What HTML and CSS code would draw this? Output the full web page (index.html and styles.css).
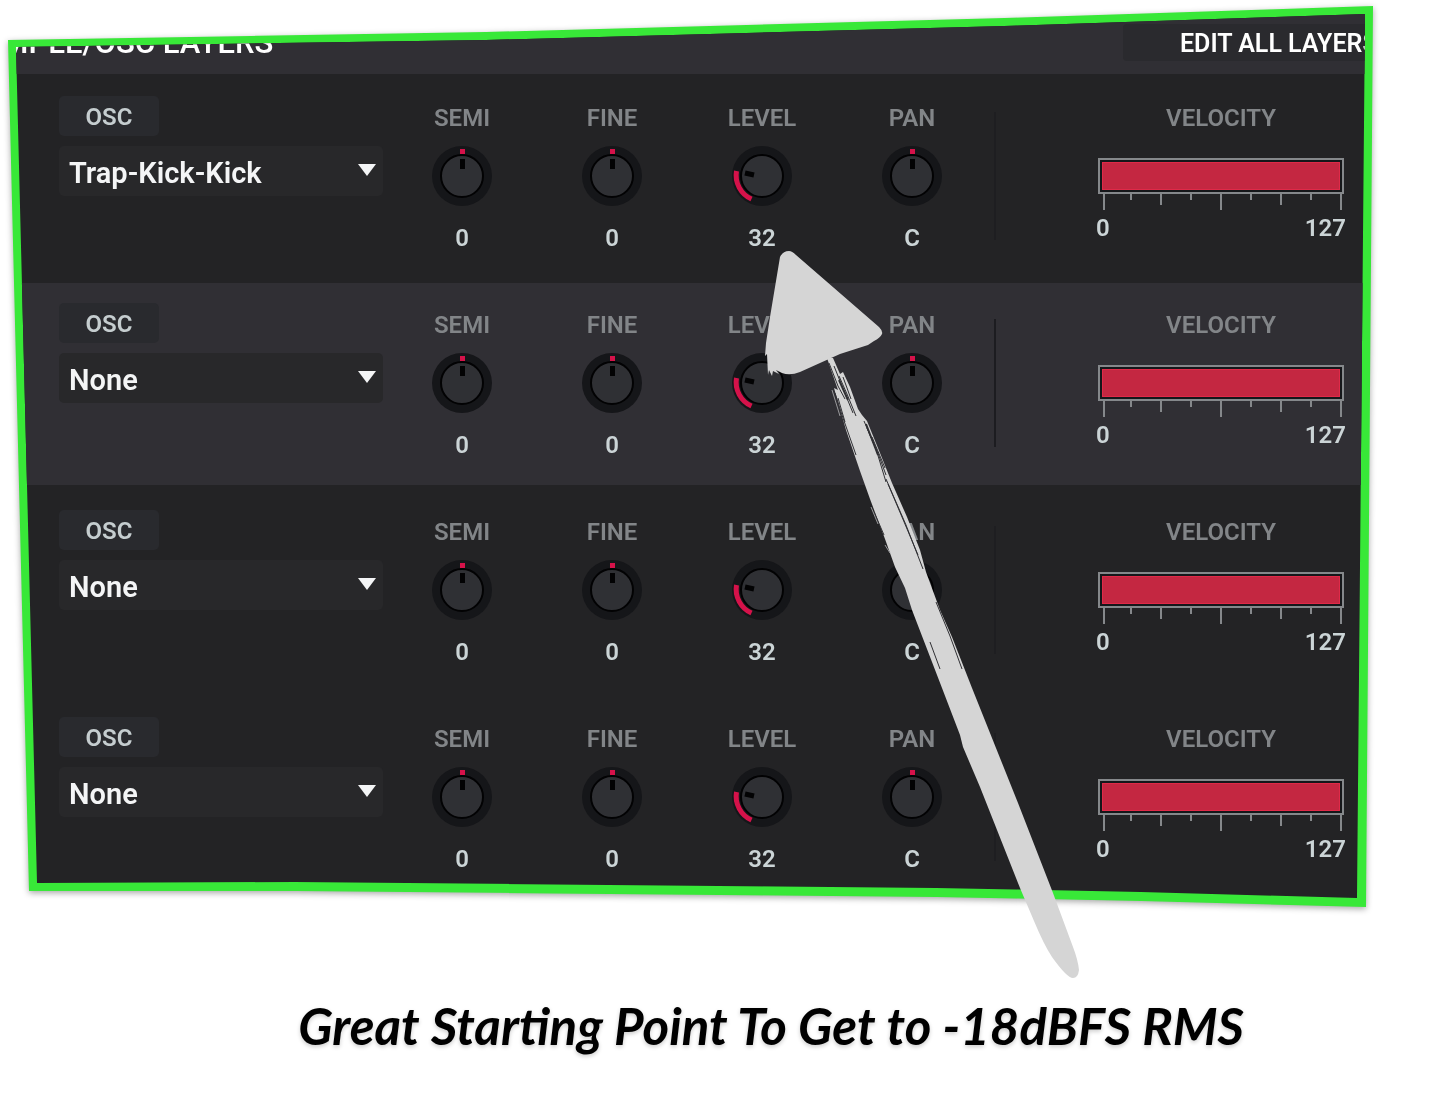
FILE: index.html
```html
<!DOCTYPE html>
<html lang="en">
<head>
  <meta charset="UTF-8">
  <meta name="viewport" content="width=device-width, initial-scale=1.0">
  <title>Sample/Osc Layers</title>
  <link rel="stylesheet" href="styles.css">
</head>
<body>
  <!-- Shared drawings -->
  <svg class="defs" aria-hidden="true">
    <symbol id="knob-center" viewBox="0 0 60 60">
      <circle cx="30" cy="30" r="30" fill="#151619"/>
      <circle cx="30" cy="30" r="21" fill="#2f3034" stroke="#020203" stroke-width="2"/>
      <rect x="28" y="13" width="5" height="10" fill="#020203"/>
      <rect x="28" y="3" width="5" height="5" fill="#d5124a"/>
    </symbol>
    <symbol id="knob-level" viewBox="0 0 60 60">
      <circle cx="30" cy="30" r="30" fill="#151619"/>
      <circle cx="30" cy="30" r="21" fill="#2f3034" stroke="#020203" stroke-width="2"/>
      <path d="M13 27 L22 29" stroke="#020203" stroke-width="5"/>
      <path d="M4.500 25 A26 26 0 0 0 19.500 53" stroke="#d5124a" stroke-width="5" fill="none"/>
    </symbol>
    <symbol id="ticks" viewBox="0 0 246 16">
      <path d="M6 0V16M123 0V16M243 0V16M63 0V11M183 0V11M33 0V6M93 0V6M153 0V6M213 0V6" stroke="#85888b" stroke-width="2"/>
    </symbol>
  </svg>

  <main class="board-wrap">
    <div class="board">
      <div class="panel">
        <header class="panel-header">
          <h1>SAMPLE/OSC LAYERS</h1>
          <button class="edit-all" type="button">EDIT ALL LAYERS</button>
        </header>

        <section class="layer">
          <div class="source">
            <button class="osc" type="button">OSC</button>
            <div class="picker">
              <select aria-label="Layer 1 sample"><option>Trap-Kick-Kick</option><option>None</option></select>
            </div>
          </div>
          <div class="knobs">
            <div class="knob"><label for="semi1">SEMI</label><div class="dial"><svg><use href="#knob-center"/></svg><input type="range" id="semi1" min="-36" max="36" value="0"></div><output for="semi1">0</output></div>
            <div class="knob"><label for="fine1">FINE</label><div class="dial"><svg><use href="#knob-center"/></svg><input type="range" id="fine1" min="-99" max="99" value="0"></div><output for="fine1">0</output></div>
            <div class="knob"><label for="level1">LEVEL</label><div class="dial"><svg><use href="#knob-level"/></svg><input type="range" id="level1" min="0" max="127" value="32"></div><output for="level1">32</output></div>
            <div class="knob"><label for="pan1">PAN</label><div class="dial"><svg><use href="#knob-center"/></svg><input type="range" id="pan1" min="-64" max="64" value="0"></div><output for="pan1">C</output></div>
          </div>
          <div class="velocity">
            <h2>VELOCITY</h2>
            <div class="bar"><div class="fill"></div></div>
            <svg class="ticks"><use href="#ticks"/></svg>
            <div class="range"><span>0</span><span>127</span></div>
          </div>
        </section>

        <section class="layer selected">
          <div class="source">
            <button class="osc" type="button">OSC</button>
            <div class="picker">
              <select aria-label="Layer 2 sample"><option>None</option></select>
            </div>
          </div>
          <div class="knobs">
            <div class="knob"><label for="semi2">SEMI</label><div class="dial"><svg><use href="#knob-center"/></svg><input type="range" id="semi2" min="-36" max="36" value="0"></div><output for="semi2">0</output></div>
            <div class="knob"><label for="fine2">FINE</label><div class="dial"><svg><use href="#knob-center"/></svg><input type="range" id="fine2" min="-99" max="99" value="0"></div><output for="fine2">0</output></div>
            <div class="knob"><label for="level2">LEVEL</label><div class="dial"><svg><use href="#knob-level"/></svg><input type="range" id="level2" min="0" max="127" value="32"></div><output for="level2">32</output></div>
            <div class="knob"><label for="pan2">PAN</label><div class="dial"><svg><use href="#knob-center"/></svg><input type="range" id="pan2" min="-64" max="64" value="0"></div><output for="pan2">C</output></div>
          </div>
          <div class="velocity">
            <h2>VELOCITY</h2>
            <div class="bar"><div class="fill"></div></div>
            <svg class="ticks"><use href="#ticks"/></svg>
            <div class="range"><span>0</span><span>127</span></div>
          </div>
        </section>

        <section class="layer">
          <div class="source">
            <button class="osc" type="button">OSC</button>
            <div class="picker">
              <select aria-label="Layer 3 sample"><option>None</option></select>
            </div>
          </div>
          <div class="knobs">
            <div class="knob"><label for="semi3">SEMI</label><div class="dial"><svg><use href="#knob-center"/></svg><input type="range" id="semi3" min="-36" max="36" value="0"></div><output for="semi3">0</output></div>
            <div class="knob"><label for="fine3">FINE</label><div class="dial"><svg><use href="#knob-center"/></svg><input type="range" id="fine3" min="-99" max="99" value="0"></div><output for="fine3">0</output></div>
            <div class="knob"><label for="level3">LEVEL</label><div class="dial"><svg><use href="#knob-level"/></svg><input type="range" id="level3" min="0" max="127" value="32"></div><output for="level3">32</output></div>
            <div class="knob"><label for="pan3">PAN</label><div class="dial"><svg><use href="#knob-center"/></svg><input type="range" id="pan3" min="-64" max="64" value="0"></div><output for="pan3">C</output></div>
          </div>
          <div class="velocity">
            <h2>VELOCITY</h2>
            <div class="bar"><div class="fill"></div></div>
            <svg class="ticks"><use href="#ticks"/></svg>
            <div class="range"><span>0</span><span>127</span></div>
          </div>
        </section>

        <section class="layer">
          <div class="source">
            <button class="osc" type="button">OSC</button>
            <div class="picker">
              <select aria-label="Layer 4 sample"><option>None</option></select>
            </div>
          </div>
          <div class="knobs">
            <div class="knob"><label for="semi4">SEMI</label><div class="dial"><svg><use href="#knob-center"/></svg><input type="range" id="semi4" min="-36" max="36" value="0"></div><output for="semi4">0</output></div>
            <div class="knob"><label for="fine4">FINE</label><div class="dial"><svg><use href="#knob-center"/></svg><input type="range" id="fine4" min="-99" max="99" value="0"></div><output for="fine4">0</output></div>
            <div class="knob"><label for="level4">LEVEL</label><div class="dial"><svg><use href="#knob-level"/></svg><input type="range" id="level4" min="0" max="127" value="32"></div><output for="level4">32</output></div>
            <div class="knob"><label for="pan4">PAN</label><div class="dial"><svg><use href="#knob-center"/></svg><input type="range" id="pan4" min="-64" max="64" value="0"></div><output for="pan4">C</output></div>
          </div>
          <div class="velocity">
            <h2>VELOCITY</h2>
            <div class="bar"><div class="fill"></div></div>
            <svg class="ticks"><use href="#ticks"/></svg>
            <div class="range"><span>0</span><span>127</span></div>
          </div>
        </section>
      </div>
    </div>
  </main>

  <!-- Brush arrow pointing at the first LEVEL value -->
  <svg class="arrow" viewBox="760 248 325 732" aria-hidden="true">
    <g fill="#d5d5d5">
      <path d="M827 358 L833 358 L840 374 L843 372 L850 387 L858 409 L862 415 L867 421 L880 453 L892 483 L907 517 L920 550 L926 572 L940 610 L952 637 L972 688 L1018 803 L1053 893 L1073 947 Q1078 960 1079 970 Q1078 978 1073 978 Q1067 978 1052 957 Q1044 945 1034 921 L1020 888 L980 787 L963 747 L960 735 L942 688 L912 610 L905 588 L895 567 L885 539 L870 499 L860 471 L846 430 L834 388 L838 390 Z"/>
      <path d="M780 257 Q783 251 789 251 Q792 251 796 255 L879 327 Q883 331 882 334 Q880 338 874 341 L868 345 L840 354 L800 372 Q790 376 782 373 L776 370 L779 374 L773 371 L772 376 L769 370 L768 375 L767 354 L765 356 L766 343 L770 317 Z"/>
    </g>
    <g fill="none" stroke="#303034" stroke-width="1">
      <path d="M829 363 L838 386 L845 399 M834 366 L844 391 L853 413 M839 376 L847 394 L856 416 M843 377 L851 399"/>
      <path d="M835 393 L843 418 L856 455 M838 398 L845 422 M848 440 L856 463"/>
      <path d="M864 421 L876 449 L886 482 M867 428 L879 456 L886 475 M872 437 L885 468 M888 484 L902 517 L918 555"/>
      <path d="M886 479 L906 525 L923 569 M874 512 L884 535"/>
      <path d="M936 602 L950 636 L962 669 M930 642 L940 669"/>
    </g>
    <path d="M839 380 L848 400 M866 424 L878 455" fill="none" stroke="#303034" stroke-width="2"/>
    <path d="M871 507 L878 524 M885 545 L890 553 M832 390 L840 416" fill="none" stroke="#9a9a9c" stroke-width="1"/>
  </svg>

  <p class="caption">Great Starting Point To Get to -18dBFS RMS</p>
</body>
</html>
```
FILE: styles.css
```css
* {
  box-sizing: border-box;
}
body {
  margin: 0;
  position: relative;
  background-color: #fff;
  font-family: Roboto, "Liberation Sans", sans-serif;
  font-size: 24px;
  font-weight: 600;
}
.defs {
  display: none;
}

/* Green frame with skewed edges */
.board-wrap {
  padding: 6px 83px 0 8px;
  filter: drop-shadow(0 2px 3px rgba(0, 0, 0, 0.35));
}
.board {
  background-color: #38e838;
  clip-path: polygon(0 34px, 35% 26px, 73% 12px, 100% 0, calc(100% - 7px) 100%, 83% calc(100% - 6px), 68% calc(100% - 10px), 21% calc(100% - 16px), 21px calc(100% - 16px));
}
.panel {
  padding-bottom: 3px;
  background-color: #232325;
  clip-path: polygon(8px 41px, 35% 34px, 73% 20px, calc(100% - 8px) 8px, calc(100% - 16px) calc(100% - 9px), 83% calc(100% - 15px), 68% calc(100% - 19px), 21% calc(100% - 25px), 29px calc(100% - 24px));
}
.panel-header {
  display: flex;
  justify-content: space-between;
  height: 68px;
  margin-bottom: 2px;
  padding-top: 18px;
  background-color: #302f34;
  overflow: hidden;
}
h1 {
  margin: 0 0 0 -46px;
  color: #fff;
  font-size: 31px;
  font-weight: 500;
  line-height: 38px;
}
.edit-all {
  width: 250px;
  height: 37px;
  padding: 2px 0 0 57px;
  border: none;
  border-radius: 4px;
  background-color: #2a2a2e;
  color: #fff;
  font: inherit;
  font-size: 25px;
  text-align: left;
  white-space: nowrap;
}

/* Layer rows */
.layer {
  display: flex;
  height: 202px;
  margin-bottom: 5px;
  padding: 20px 29px 0 51px;
}
.layer.selected {
  background-color: #302f34;
}
.source {
  width: 324px;
  margin-right: 4px;
}
.osc {
  display: block;
  width: 100px;
  height: 40px;
  margin-bottom: 10px;
  padding: 2px 0 0;
  border: none;
  border-radius: 5px;
  background-color: #292a2e;
  color: #c5cdcf;
  font: inherit;
}
.picker {
  position: relative;
}
.picker::after {
  content: "";
  position: absolute;
  top: 18px;
  right: 7px;
  width: 18px;
  height: 12px;
  background-color: #f4f5f6;
  clip-path: polygon(0 0, 100% 0, 50% 100%);
  pointer-events: none;
}
select {
  appearance: none;
  display: block;
  width: 100%;
  height: 50px;
  padding: 4px 40px 0 10px;
  border: none;
  border-radius: 5px;
  background-color: #28282a;
  color: #f4f5f6;
  font: inherit;
  font-size: 29px;
}
.knobs {
  display: flex;
  flex: 1;
  margin-right: 7px;
}
.knob {
  display: flex;
  flex: 1;
  flex-direction: column;
  align-items: center;
}
.knob label,
h2 {
  margin: 0;
  color: #828588;
  font-size: 24px;
  font-weight: 600;
  line-height: 44px;
}
.dial {
  position: relative;
  width: 60px;
  height: 60px;
  margin: 6px 0 17px;
}
.dial svg {
  display: block;
  width: 60px;
  height: 60px;
}
/* The range input sits invisibly on top of the drawn dial */
.dial input {
  position: absolute;
  inset: 0;
  width: 100%;
  height: 100%;
  margin: 0;
  opacity: 0;
}
output {
  color: #cbd4d6;
  line-height: 30px;
}
.velocity {
  display: flex;
  width: 350px;
  flex-direction: column;
  padding-left: 104px;
  background: linear-gradient(#1e1e21, #1e1e21) 0 16px / 2px 128px no-repeat;
}
.selected .velocity {
  background-image: linear-gradient(#1c1c20, #1c1c20);
}
h2 {
  text-align: center;
}
.bar {
  height: 36px;
  margin-top: 18px;
  padding: 2px;
  border: 2px solid #85888b;
  background-color: #15171a;
}
.fill {
  height: 100%;
  border: 1px solid #e02a48;
  background-color: #c42741;
}
.ticks {
  display: block;
  width: 246px;
  height: 16px;
}
.range {
  display: flex;
  justify-content: space-between;
  margin: 3px -2px 0;
  color: #cbd4d6;
  line-height: 30px;
}

.arrow {
  position: absolute;
  top: 248px;
  left: 760px;
  width: 325px;
  height: 732px;
  pointer-events: none;
}
.caption {
  margin: 83px 0 0;
  padding-left: 86px;
  color: #000;
  font-family: Lato, "Liberation Sans", sans-serif;
  font-size: 51px;
  font-style: italic;
  font-weight: 700;
  line-height: 72px;
  text-align: center;
  text-shadow: 0 2px 4px rgba(0, 0, 0, 0.2);
}
```
